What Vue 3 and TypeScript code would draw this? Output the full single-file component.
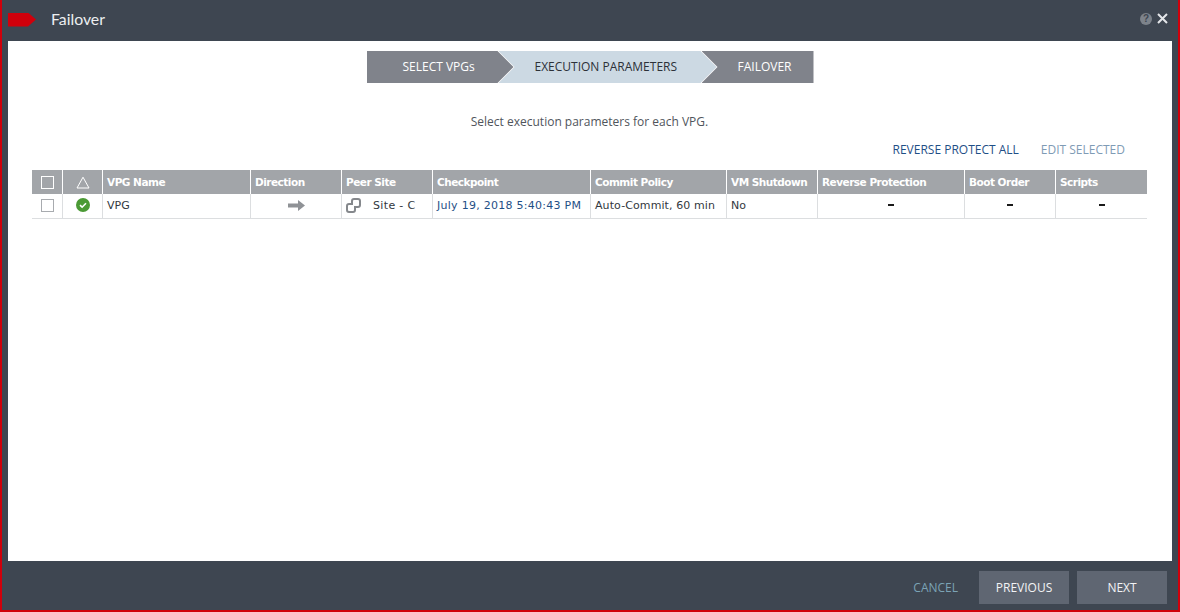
<script setup lang="ts">
interface Column { label: string; align?: string }
const columns: Column[] = [
  { label: '' }, { label: '' }, { label: 'VPG Name' }, { label: 'Direction' }, { label: 'Peer Site' },
  { label: 'Checkpoint' }, { label: 'Commit Policy' }, { label: 'VM Shutdown' },
  { label: 'Reverse Protection' }, { label: 'Boot Order' }, { label: 'Scripts' },
]
</script>

<template>
  <div class="frame">
    <header class="top">
      <span class="flag"></span>
      <h1 class="title">Failover</h1>
      <div class="top-icons">
        <span class="help">?</span>
        <svg class="close" width="11" height="11" viewBox="0 0 11 11"><path d="M1 1l9 9M10 1l-9 9" stroke="#e4e6e9" stroke-width="2" fill="none"/></svg>
      </div>
    </header>

    <main class="body">
      <nav class="steps">
        <div class="step first">SELECT VPGs</div>
        <div class="step active">EXECUTION PARAMETERS</div>
        <div class="step last">FAILOVER</div>
      </nav>
      <p class="hint">Select execution parameters for each VPG.</p>
      <div class="actions">
        <span class="act on">REVERSE PROTECT ALL</span>
        <span class="act off">EDIT SELECTED</span>
      </div>

      <div class="grid head">
        <div v-for="(c, i) in columns" :key="i" class="th">
          <span v-if="i === 0" class="box head-box"></span>
          <svg v-else-if="i === 1" width="14" height="13" viewBox="0 0 14 13"><path d="M7 1.2 13 12H1z" fill="none" stroke="#fff" stroke-width="1"/></svg>
          <template v-else>{{ c.label }}</template>
        </div>
      </div>
      <div class="grid row">
        <div class="td center"><span class="box"></span></div>
        <div class="td center">
          <svg width="14" height="14" viewBox="0 0 14 14"><circle cx="7" cy="7" r="7" fill="#4b9a35"/><path d="M4 7.2l2.1 2L10 5.2" fill="none" stroke="#fff" stroke-width="1.6"/></svg>
        </div>
        <div class="td">VPG</div>
        <div class="td center">
          <svg width="17" height="11" viewBox="0 0 17 11"><path d="M0 3.5h10V0l7 5.500-7 5.500V7.500H0z" fill="#8f9296"/></svg>
        </div>
        <div class="td site">
          <svg width="15" height="15" viewBox="0 0 15 15" fill="none" stroke="#85888c" stroke-width="2"><path d="M6 7V3a2 2 0 0 1 2-2h4a2 2 0 0 1 2 2v4a2 2 0 0 1-2 2H9"/><path d="M9 8v4a2 2 0 0 1-2 2H3a2 2 0 0 1-2-2V8a2 2 0 0 1 2-2h3.500"/></svg>
          <span class="site-name">Site - C</span>
        </div>
        <div class="td link">July 19, 2018 5:40:43 PM</div>
        <div class="td">Auto-Commit, 60 min</div>
        <div class="td">No</div>
        <div class="td center"><span class="dash"></span></div>
        <div class="td center"><span class="dash"></span></div>
        <div class="td center"><span class="dash"></span></div>
      </div>
    </main>

    <footer class="bottom">
      <span class="cancel">CANCEL</span>
      <button class="btn">PREVIOUS</button>
      <button class="btn">NEXT</button>
    </footer>
  </div>
</template>

<style>
html, body { margin: 0; background: #3e4651; }
</style>

<style scoped>
.frame {
  width: 1180px;
  height: 612px;
  box-sizing: border-box;
  display: flex;
  flex-direction: column;
  background: #3e4651;
  border-left: 2px solid #d0000b;
  border-right: 2px solid #d0000b;
  border-bottom: 2px solid #d0000b;
  font-family: "Open Sans", sans-serif;
}
.top {
  height: 41px;
  flex: none;
  display: flex;
  align-items: center;
  padding: 0 10px 2px 6px;
  box-sizing: border-box;
}
.flag {
  width: 28px;
  height: 14px;
  background: #d0000b;
  clip-path: polygon(0 0, 20px 0, 100% 50%, 20px 100%, 0 100%);
}
.title {
  margin: 0 0 2px 15px;
  font: 400 15.800px Lato, sans-serif;
  color: #eceef0;
}
.top-icons {
  margin-left: auto;
  display: flex;
  align-items: center;
  gap: 5px;
  padding-bottom: 2px;
}
.help {
  width: 12px;
  height: 12px;
  border-radius: 50%;
  background: #7d838b;
  color: #3e4651;
  font: 700 10px/12px "Liberation Sans", sans-serif;
  text-align: center;
}
.body {
  flex: 1;
  margin: 0 6px;
  background: #fff;
  padding: 10px 25px 0 24px;
  display: flex;
  flex-direction: column;
  align-items: stretch;
}
.steps {
  display: flex;
  justify-content: center;
  height: 32px;
  margin-left: 1px;
}
.step {
  height: 32px;
  padding-bottom: 2px;
  display: flex;
  align-items: center;
  box-sizing: border-box;
  font-size: 12px;
  background: #80838b;
  color: #fff;
}
.first {
  width: 147px;
  padding-left: 36px;
  clip-path: polygon(0 0, 131px 0, 100% 50%, 131px 100%, 0 100%);
}
.active {
  width: 218px;
  margin-left: -15px;
  padding-left: 36px;
  background: #ccd9e3;
  color: #2c3138;
  clip-path: polygon(0 0, 202px 0, 100% 50%, 202px 100%, 0 100%, 16px 50%);
}
.last {
  width: 112px;
  margin-left: -15px;
  padding-left: 36px;
  clip-path: polygon(0 0, 100% 0, 100% 100%, 0 100%, 16px 50%);
}
.hint {
  margin: 31px 0 0;
  text-align: center;
  font: 400 12px/16px "Open Sans", sans-serif;
  color: #50555c;
}
.actions {
  display: flex;
  justify-content: flex-end;
  gap: 22px;
  margin-top: 12px;
  padding-right: 22px;
  font-size: 12px;
  line-height: 16px;
}
.on { color: #1f4f86; }
.off { color: #7f9bb5; }
.grid {
  display: grid;
  grid-template-columns: 31px 40px 148px 91px 91px 158px 136px 91px 147px 91px 91px;
  font: 400 11px "DejaVu Sans", sans-serif;
}
.head { margin-top: 12px; height: 24px; }
.th {
  background: #a2a5a9;
  color: #fff;
  font-weight: 700;
  font-size: 10.500px;
  letter-spacing: -0.5px;
  border-right: 1px solid #fff;
  display: flex;
  align-items: center;
  padding-left: 4px;
  box-sizing: border-box;
}
.th:nth-child(-n+2) { justify-content: center; padding-left: 0; }
.th:last-child { border-right: 0; }
.row { height: 25px; border-bottom: 1px solid #dcdee0; box-sizing: border-box; }
.td {
  border-right: 1px solid #dcdee0;
  display: flex;
  align-items: center;
  padding: 0 0 2px 4px;
  box-sizing: border-box;
  color: #33383e;
  font-size: 11px;
  letter-spacing: 0.1px;
  white-space: nowrap;
}
.td:last-child { border-right: 0; }
.center { justify-content: center; padding-left: 0; }
.site { gap: 12px; }
.site-name { letter-spacing: 0.35px; }
.link { color: #1f4f86; letter-spacing: 0.27px; }
.box {
  width: 11px;
  height: 11px;
  border: 1px solid #a8abaf;
  background: #fff;
  display: block;
}
.head-box { background: transparent; border-color: #fff; }
.dash { width: 6px; height: 2px; background: #1a1a1a; }
.bottom {
  height: 49px;
  flex: none;
  display: flex;
  align-items: flex-start;
  justify-content: flex-end;
  padding: 10px 11px 0 0;
  box-sizing: border-box;
  gap: 8px;
}
.cancel {
  color: #7ba3b5;
  font-size: 12px;
  line-height: 33px;
  margin-right: 13px;
}
.btn {
  width: 90px;
  height: 33px;
  border: 0;
  background: #5f6672;
  color: #f2f3f5;
  font: 400 12px "Open Sans", sans-serif;
  padding: 0;
}
</style>
